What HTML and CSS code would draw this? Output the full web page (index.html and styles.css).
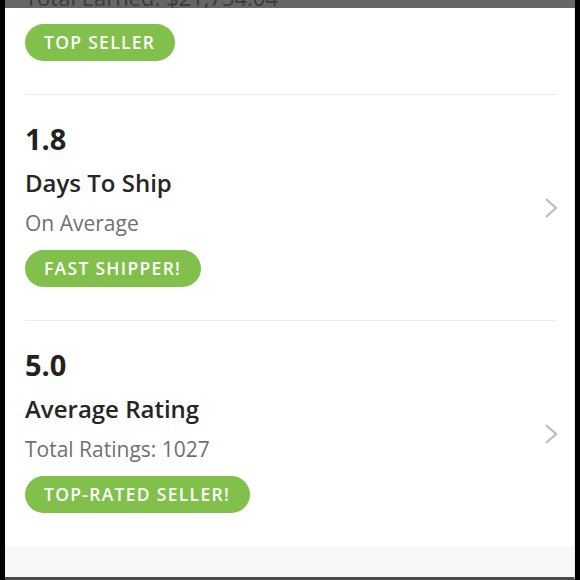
FILE: index.html
```html
<!DOCTYPE html>
<html>
<head>
<meta charset="utf-8">
<link rel="stylesheet" href="styles.css">
</head>
<body>
<div class="screen">
  <div class="topbar"><span class="topbar-text">Total Earned: $21,754.04</span></div>
  <div class="content">
    <div class="intro">
      <span class="pill">TOP SELLER</span>
    </div>
    <div class="stat">
      <div class="stat-body">
        <div class="stat-value">1.8</div>
        <div class="stat-title">Days To Ship</div>
        <div class="stat-sub">On Average</div>
        <span class="pill">FAST SHIPPER!</span>
      </div>
      <svg class="chevron" width="14" height="22" viewBox="0 0 14 22"><path d="M2 2 L12 11 L2 20" fill="none" stroke="#bdbdbd" stroke-width="2.2"/></svg>
    </div>
    <div class="stat">
      <div class="stat-body">
        <div class="stat-value">5.0</div>
        <div class="stat-title">Average Rating</div>
        <div class="stat-sub">Total Ratings: 1027</div>
        <span class="pill">TOP-RATED SELLER!</span>
      </div>
      <svg class="chevron" width="14" height="22" viewBox="0 0 14 22"><path d="M2 2 L12 11 L2 20" fill="none" stroke="#bdbdbd" stroke-width="2.2"/></svg>
    </div>
  </div>
  <div class="footer"></div>
</div>
</body>
</html>
```
FILE: styles.css
```css
html, body {
  margin: 0;
  padding: 0;
  background: #000;
}
.screen {
  width: 580px;
  height: 580px;
  box-sizing: border-box;
  border-left: 5px solid #000;
  border-right: 5px solid #000;
  display: flex;
  flex-direction: column;
  background: #fff;
  font-family: "Open Sans", Lato, sans-serif;
}
.topbar {
  height: 8px;
  flex: none;
  background: #666;
  overflow: hidden;
  padding-left: 20px;
}
.topbar-text {
  display: block;
  margin-top: -14px;
  font-size: 22px;
  line-height: 22px;
  color: #3a3a3a;
}
.content {
  flex: 1;
  border-right: 1px solid #e4e4e4;
  padding: 0 18px 0 20px;
  display: flex;
  flex-direction: column;
}
.intro {
  padding: 16px 0 33px;
  border-bottom: 1px solid #ececec;
}
.pill {
  display: inline-block;
  background: #80c04b;
  color: #fff;
  font-weight: 600;
  font-size: 17.5px;
  letter-spacing: 1.3px;
  height: 37px;
  line-height: 37px;
  padding: 0 20px 0 19px;
  border-radius: 19px;
  box-sizing: border-box;
}
.stat {
  display: flex;
  align-items: center;
  padding: 25px 0 33px;
  border-bottom: 1px solid #ececec;
}
.stat:last-child {
  border-bottom: none;
}
.stat-body {
  flex: 1;
  display: flex;
  flex-direction: column;
  align-items: flex-start;
}
.stat-value {
  font-size: 29px;
  font-weight: 700;
  color: #222;
  line-height: 36px;
  margin-top: 1px;
}
.stat-title {
  font-size: 24px;
  font-weight: 600;
  color: #262626;
  line-height: 30px;
  margin-top: 11px;
}
.stat-sub {
  font-size: 21px;
  color: #707070;
  line-height: 28px;
  margin-top: 11px;
}
.stat .pill {
  margin-top: 13px;
}
.chevron {
  flex: none;
  margin-right: -2px;
  margin-top: 8px;
}
.footer {
  height: 31px;
  flex: 1;
  background: #f7f7f7;
  border-right: 1px solid #e4e4e4;
  border-bottom: 3px solid #4a4a4a;
}
```
